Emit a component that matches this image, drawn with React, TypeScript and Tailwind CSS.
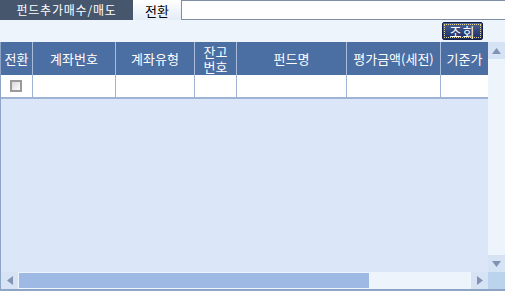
import React from "react";

const cols = [
  { w: 32, label: "전환" },
  { w: 83, label: "계좌번호" },
  { w: 79, label: "계좌유형" },
  { w: 42, label: "잔고\n번호" },
  { w: 110, label: "펀드명" },
  { w: 94, label: "평가금액(세전)" },
  { w: 48, label: "기준가" },
];

export default function App() {
  const font = { fontFamily: '"Noto Sans CJK KR", "Noto Sans", sans-serif' };
  return (
    <div
      className="w-[505px] h-[291px] bg-[#eef4fb] flex flex-col overflow-hidden text-[12px] leading-none"
      style={font}
    >
      {/* tabs */}
      <div className="h-[20px] flex shrink-0">
        <div className="w-[133px] bg-[#46566d] text-white flex items-center justify-center tracking-[0.8px]">
          펀드추가매수/매도
        </div>
        <div className="w-[49px] bg-gradient-to-b from-white to-[#e4ecf7] border-r border-[#7f8ea6] text-black flex items-center justify-center text-[13px]">
          전환
        </div>
        <div className="flex-1 bg-white border-y border-[#7f8ea6]" />
      </div>
      {/* toolbar */}
      <div className="h-[22px] flex items-center justify-end pr-[22px] shrink-0">
        <div className="w-[41px] h-[18px] rounded-[2px] bg-gradient-to-b from-[#4c6296] to-[#1c2d66] border border-[#15204a] p-[1px] flex">
          <div className="flex-1 border border-dotted border-[#e8d88a] flex items-center justify-center text-white text-[13px] tracking-[1px]">
            조회
          </div>
        </div>
      </div>
      {/* grid */}
      <div className="flex-1 flex flex-col min-h-0">
        <div className="flex-1 flex min-h-0">
          <div className="flex-1 flex flex-col bg-[#dbe7f8] border-l border-[#8ea4c6] overflow-hidden">
            <div className="h-[33px] flex bg-[#4b6ea3] shrink-0">
              {cols.map((c, i) => (
                <div
                  key={i}
                  style={{ width: c.w }}
                  className="shrink-0 border-r border-[#a9bcdb] flex items-center justify-center text-white text-center whitespace-pre leading-[15px] text-[13px]"
                >
                  {c.label}
                </div>
              ))}
            </div>
            <div className="h-[24px] flex bg-white border-b-2 border-[#9fb4d4] shrink-0">
              {cols.map((c, i) => (
                <div
                  key={i}
                  style={{ width: c.w }}
                  className="shrink-0 border-r border-[#9fb4d4] flex items-center justify-center"
                >
                  {i === 0 && (
                    <div className="w-[12px] h-[12px] border-2 border-[#9a9a9a] bg-gradient-to-br from-[#d8d8d8] to-white -ml-[1px]" />
                  )}
                </div>
              ))}
            </div>
          </div>
          {/* vertical scroll */}
          <div className="w-[17px] bg-[#eef4fc] flex flex-col justify-between">
            <div className="h-[17px] bg-[#d6e3f5] flex items-center justify-center">
              <svg width="9" height="6" viewBox="0 0 9 6">
                <polygon points="4.5,0 9,6 0,6" fill="#8093b3" />
              </svg>
            </div>
            <div className="h-[17px] bg-[#d6e3f5] flex items-center justify-center">
              <svg width="9" height="6" viewBox="0 0 9 6">
                <polygon points="0,0 9,0 4.5,6" fill="#8093b3" />
              </svg>
            </div>
          </div>
        </div>
        {/* horizontal scroll */}
        <div className="h-[17px] flex shrink-0 border-l border-[#8ea4c6]">
          <div className="flex-1 flex bg-[#eef4fc]">
            <div className="w-[17px] bg-[#d6e3f5] flex items-center justify-center">
              <svg width="6" height="9" viewBox="0 0 6 9">
                <polygon points="0,4.5 6,0 6,9" fill="#8093b3" />
              </svg>
            </div>
            <div className="w-[350px] my-[1px] ml-[1px] bg-[#9eb9e3]" />
            <div className="flex-1" />
            <div className="w-[17px] bg-[#d6e3f5] flex items-center justify-center">
              <svg width="6" height="9" viewBox="0 0 6 9">
                <polygon points="0,0 6,4.5 0,9" fill="#8093b3" />
              </svg>
            </div>
          </div>
          <div className="w-[17px] bg-[#bcd3ee]" />
        </div>
        <div className="h-[2px] bg-[#8ea4c6] shrink-0" />
      </div>
    </div>
  );
}
